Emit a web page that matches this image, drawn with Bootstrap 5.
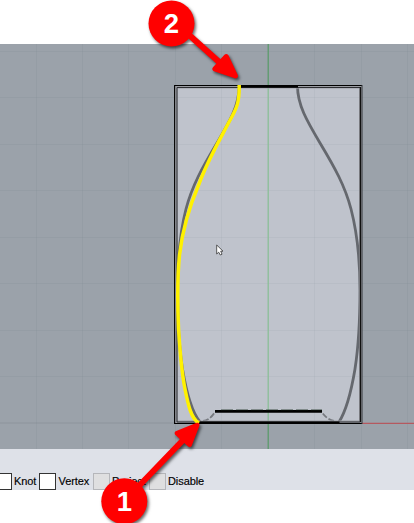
<!DOCTYPE html>
<html lang="en">
<head>
<meta charset="utf-8">
<meta name="viewport" content="width=device-width, initial-scale=1">
<title>Curve tracing</title>
<link href="https://cdn.jsdelivr.net/npm/bootstrap@5.3.0/dist/css/bootstrap.min.css" rel="stylesheet">
<style>
body { background: #fff; font-family: "Liberation Sans", Arial, sans-serif; overflow: hidden; }
.stage { width: 414px; height: 523px; padding-top: 44px; }
.viewport { height: 405px; }
.snapbar { height: 41px; background: #dee1e8; padding-top: 24px; font-size: 11px; line-height: 17px; color: #000; }
.snap { height: 17px; }
.snap-box { width: 17px; height: 17px; margin: 0; border: 1px solid #333; background: #fff; flex: none; }
.snap-box.off { background: #dfdfe0; border-color: #b5b6ba; }
.snap-label { padding-left: 2px; white-space: nowrap; letter-spacing: -.08px; -webkit-text-stroke: .15px #000; }
.snap-knot { width: 43.5px; margin-left: -5px; }
.snap-vertex { width: 54.5px; }
.snap-vertex .snap-label { padding-left: 3px; }
.snap-project { width: 56px; }
.callouts { left: 0; top: 0; pointer-events: none; }
.num { font: 700 27.5px "Liberation Sans", Arial, sans-serif; fill: #fff; text-anchor: middle; }
</style>
<script src="https://cdn.jsdelivr.net/npm/bootstrap@5.3.0/dist/js/bootstrap.bundle.min.js"></script>
</head>
<body>
<main class="stage position-relative overflow-hidden">
  <svg class="viewport d-block w-100" viewBox="0 44 414 405" role="img" aria-label="Bottle profile in the front viewport">
    <rect y="44" width="414" height="405" fill="#9ba2aa"/>
    <rect x="175" y="86" width="187" height="337" fill="#bfc3cc"/>
    <!-- grid -->
    <g stroke="#7d868e" stroke-opacity=".17" fill="none">
      <path d="M36.5 44V449M82.5 44V449M128.5 44V449M175.5 44V449M314.5 44V86M361.5 44V449M407.5 44V449M221.5 44V86M0 51.5H414M0 97.5H175M0 144.5H175M0 190.5H175M0 237.5H175M0 283.5H175M0 330.5H175M0 376.5H175M362 97.5H414M362 144.5H414M362 190.5H414M362 237.5H414M362 283.5H414M362 330.5H414M362 376.5H414M221.5 423V449M314.5 423V449"/>
      <path d="M221.5 86V423M314.5 86V423M175 97.5H362M175 144.5H362M175 190.5H362M175 237.5H362M175 283.5H362M175 330.5H362M175 376.5H362" stroke-opacity=".09"/>
      <path d="M0 423H175" stroke-width="1.5" stroke-opacity=".35"/>
    </g>
    <!-- axes -->
    <path d="M268.2 44V86M268.2 424V449" stroke="#579b67" stroke-width="1.2"/>
    <path d="M268.2 86V423" stroke="#8bbf98" stroke-width="1.3"/>
    <path d="M362 423.3H414" stroke="#b5595f" stroke-width="1.2"/>
    <!-- bottle silhouette -->
    <g fill="none" stroke="#65686e" stroke-width="2.8">
      <path d="M297.5 86C297.5 105 307 121 320 143C335 168 345 186 351 209C358 236 360 260 360 290C360 318 359 343 355 369C351 393 346 411 339 422"/>
      <path d="M239.2 86C239.2 105 230 121 217 143C202 168 192 186 186 209C179 236 177.5 260 177.5 290C177.5 318 178.5 343 182.5 369C186.5 393 191 411 200 422"/>
      <path d="M203 421Q209 421 215 412M334 421Q327 420 321 411" stroke="#777a80" stroke-width="1.8" stroke-dasharray="6 2"/>
    </g>
    <!-- double frame -->
    <g fill="none">
      <rect x="176" y="87" width="184.5" height="335" stroke="#9b9da3" stroke-width="3"/>
      <path d="M362 85.5H174.6V423.5H362" stroke="#000" stroke-width="1.1"/>
      <path d="M177 422V87.5H360.3V422Z" stroke="#2d2f33" stroke-width="1"/>
      <path d="M360.5 87V422" stroke="#111" stroke-width="1.2"/>
      <path d="M362 85V424" stroke="#34363a" stroke-width="1"/>
    </g>
    <path d="M239 86.3H298" stroke="#000" stroke-width="2.4"/>
    <path d="M199 422.8H339.5" stroke="#000" stroke-width="2.4"/>
    <path d="M215 411.4H322" stroke="#000" stroke-width="2.8"/>
    <path d="M221 409.8H322" stroke="#26372b" stroke-width=".6" stroke-dasharray="12 3"/>
    <!-- traced curve -->
    <path d="M239.2 85C239.5 102 237 108 229 122C217 145 207 162 199 184C190 205 182 233 179.5 255C177.5 275 177.5 305 178.5 328C180 352 181 369 185 389C188 404 191 419 199 423" fill="none" stroke="#fff100" stroke-width="3.5"/>
    <!-- pointer -->
    <path d="M216.7 245V254L218.7 252.2L220.3 255L222 254.2L220.7 251.2H223Z" fill="#fff" stroke="#333" stroke-width=".8"/>
  </svg>

  <div class="snapbar d-flex">
    <label class="snap snap-knot d-flex"><span class="snap-box"></span><span class="snap-label">Knot</span></label>
    <label class="snap snap-vertex d-flex"><span class="snap-box"></span><span class="snap-label">Vertex</span></label>
    <label class="snap snap-project d-flex"><span class="snap-box off"></span><span class="snap-label">Project</span></label>
    <label class="snap d-flex"><span class="snap-box off"></span><span class="snap-label">Disable</span></label>
  </div>

  <!-- numbered callouts over the drawing -->
  <svg class="callouts position-absolute" width="414" height="523" viewBox="0 0 414 523">
    <defs>
      <filter id="shade" x="-20%" y="-20%" width="150%" height="150%" color-interpolation-filters="sRGB">
        <feDropShadow dx="1.5" dy="2" stdDeviation="1.4" flood-color="#000" flood-opacity=".6"/>
      </filter>
    </defs>
    <g fill="#f00" stroke="#f00" stroke-linejoin="round" stroke-linecap="round" filter="url(#shade)">
      <path d="M188 34L223 65.5" stroke-width="6"/>
      <path d="M226.3 56.5L214.8 69L235.5 76Z" stroke-width="5"/>
      <circle cx="171.5" cy="23.5" r="23" stroke="none"/>
    </g>
    <g fill="#f00" stroke="#f00" stroke-linejoin="round" stroke-linecap="round" filter="url(#shade)">
      <path d="M136 489L186 437" stroke-width="6"/>
      <path d="M197 425.2L177.2 433.2L189.5 444.5Z" stroke-width="5"/>
      <circle cx="124.3" cy="501.3" r="23" stroke="none"/>
    </g>
    <text class="num" x="171.3" y="33">2</text>
    <text class="num" x="124.3" y="511">1</text>
  </svg>
</main>
</body>
</html>
